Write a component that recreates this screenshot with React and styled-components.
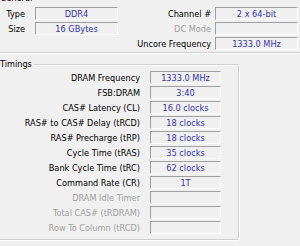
import React from "react";
import styled, { createGlobalStyle } from "styled-components";

const Global = createGlobalStyle`
  html, body { margin: 0; padding: 0; background: #f0f0f0; }
`;

const Root = styled.div`
  width: 300px;
  height: 246px;
  overflow: hidden;
  background: #f0f0f0;
  font-family: "DejaVu Sans Condensed", "DejaVu Sans", sans-serif;
  font-stretch: condensed;
  font-size: 9.1px;
  color: #000;
`;

const Canvas = styled.div`
  margin: -2px 0 0 -6px;
  width: 318px;
  display: flex;
  flex-direction: column;
  align-items: flex-start;
`;

const GroupBox = styled.div`
  position: relative;
  box-sizing: border-box;
  width: ${(p) => p.$width}px;
  margin-top: ${(p) => p.$top || 0}px;
  border: 1px solid #d0d0d0;
  border-radius: 2px;
  box-shadow: inset 1px 1px 0 #fff, 1px 1px 0 #fff;
  padding: ${(p) => p.$pad};
`;

const GroupTitle = styled.div`
  position: absolute;
  top: -7px;
  left: 3px;
  padding: 0 2px;
  line-height: 12px;
  background: #f0f0f0;
`;

const GeneralGrid = styled.div`
  display: grid;
  grid-template-columns: 35px 83px 1fr 83px;
  grid-auto-rows: 13px;
  row-gap: 2px;
`;

const TimingGrid = styled.div`
  display: grid;
  grid-template-columns: 1fr 71px;
  grid-auto-rows: 13px;
  row-gap: 2px;
`;

const Label = styled.div`
  display: flex;
  align-items: center;
  justify-content: flex-end;
  padding-right: ${(p) => p.$gap}px;
  white-space: nowrap;
  color: ${(p) => (p.$disabled ? "#a0a0a0" : "#000")};
`;

const Field = styled.div`
  box-sizing: border-box;
  border: 1px solid;
  border-color: #a0a0a0 #ffffff #ffffff #a0a0a0;
  background: #f0f0f0;
  color: #3434a8;
  display: flex;
  align-items: center;
  justify-content: center;
  white-space: nowrap;
`;

const Empty = styled.div``;

const timings = [
  ["DRAM Frequency", "1333.0 MHz"],
  ["FSB:DRAM", "3:40"],
  ["CAS# Latency (CL)", "16.0 clocks"],
  ["RAS# to CAS# Delay (tRCD)", "18 clocks"],
  ["RAS# Precharge (tRP)", "18 clocks"],
  ["Cycle Time (tRAS)", "35 clocks"],
  ["Bank Cycle Time (tRC)", "62 clocks"],
  ["Command Rate (CR)", "1T"],
  ["DRAM Idle Timer", "", true],
  ["Total CAS# (tRDRAM)", "", true],
  ["Row To Column (tRCD)", "", true],
];

export default function App() {
  return (
    <Root>
      <Global />
      <Canvas>
        <GroupBox $width={318} $pad="8px 13px 2px 5px">
          <GroupTitle>General</GroupTitle>
          <GeneralGrid>
            <Label $gap={10}>Type</Label>
            <Field>DDR4</Field>
            <Label $gap={4}>Channel #</Label>
            <Field>2 x 64-bit</Field>
            <Label $gap={10}>Size</Label>
            <Field>16 GBytes</Field>
            <Label $gap={4} $disabled>
              DC Mode
            </Label>
            <Field />
            <Empty />
            <Empty />
            <Label $gap={4}>Uncore Frequency</Label>
            <Field>1333.0 MHz</Field>
          </GeneralGrid>
        </GroupBox>
        <GroupBox $width={245} $top={11} $pad="6px 17px 5px 5px">
          <GroupTitle>Timings</GroupTitle>
          <TimingGrid>
            {timings.map(([label, value, disabled]) => (
              <React.Fragment key={label}>
                <Label $gap={10} $disabled={disabled}>
                  {label}
                </Label>
                <Field>{value}</Field>
              </React.Fragment>
            ))}
          </TimingGrid>
        </GroupBox>
      </Canvas>
    </Root>
  );
}
